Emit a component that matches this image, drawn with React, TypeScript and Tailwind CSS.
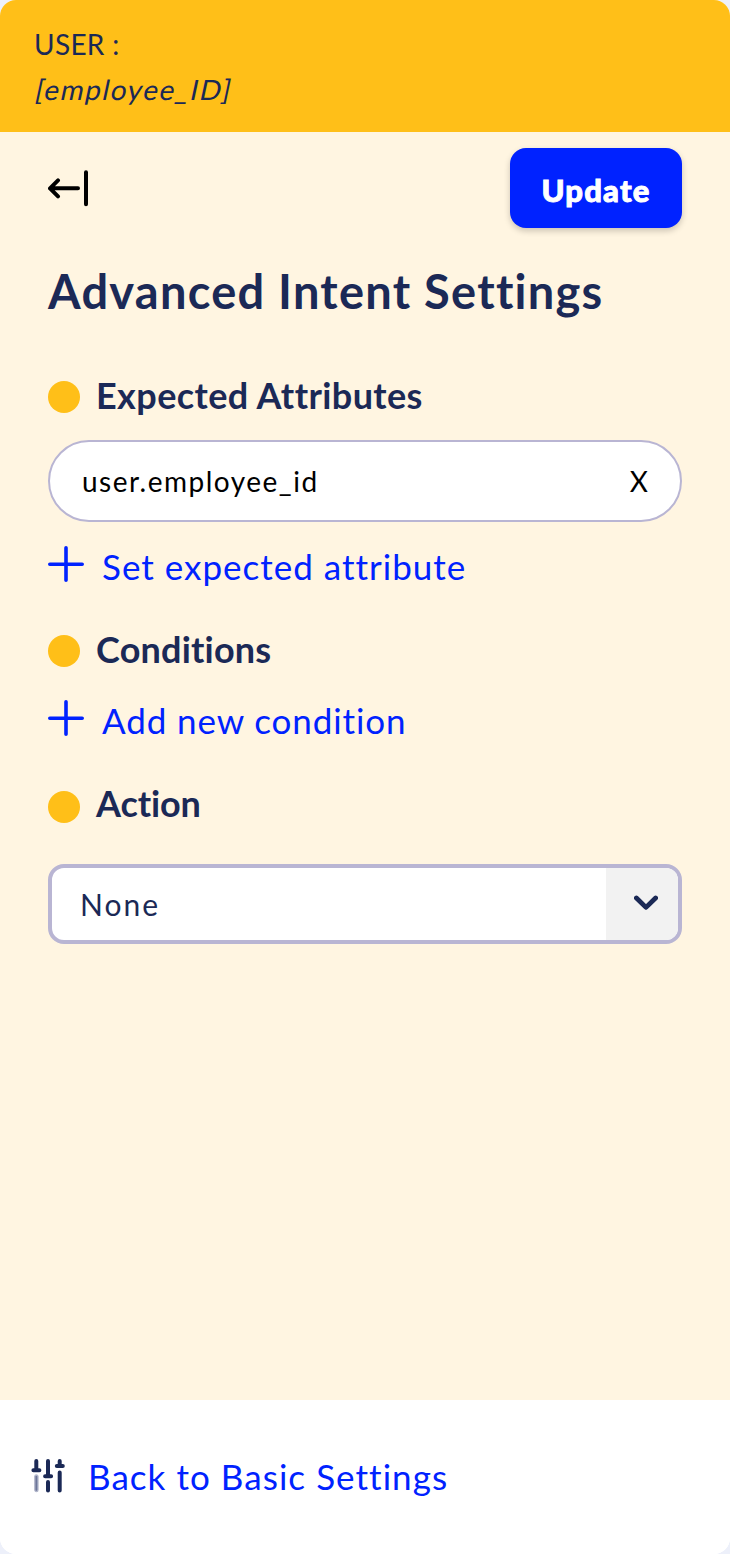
import type { ReactNode } from "react";

function SectionHeading({ children, className, dotClass, textClass }: { children: ReactNode; className: string; dotClass: string; textClass: string }) {
  return (
    <div className={`flex h-12 items-center ${className}`}>
      <span className={`size-8 shrink-0 rounded-full bg-[#ffbf18] ${dotClass}`} />
      <h2 className={`ml-4 whitespace-nowrap text-[36px] leading-[48px] font-bold ${textClass}`}>{children}</h2>
    </div>
  );
}

function AddLink({ children, className, textClass }: { children: ReactNode; className: string; textClass: string }) {
  return (
    <button className={`flex h-12 items-center text-[#0022ff] ${className}`}>
      <svg className="mb-1 size-9 shrink-0" viewBox="0 0 36 36" fill="none" stroke="currentColor" strokeWidth="3.6" strokeLinecap="round">
        <path d="M18 1.8v32.4M1.8 18.3h32.4" />
      </svg>
      <span className={`whitespace-nowrap text-[35px] leading-[48px] ${textClass}`}>{children}</span>
    </button>
  );
}

export default function App() {
  return (
    <div className="h-[1554px] w-[730px] bg-[#edf0fa] font-['Lato','Liberation_Sans',sans-serif] text-[#1b2956]">
      <div className="flex h-full flex-col overflow-hidden rounded-2xl bg-white">
        <header className="h-[132px] shrink-0 bg-[#ffbf18] pt-[21px] pl-8 text-[28px] leading-[46px]">
          <p className="pl-0.5 tracking-[0.3px]">USER :</p>
          <p className="-mt-px ml-1 w-fit -skew-x-12 tracking-[1.55px]">[employee_ID]</p>
        </header>

        <main className="flex flex-1 flex-col bg-[#fff5e1] px-12 pt-4">
          <div className="flex h-20 items-center justify-between">
            <button aria-label="Back" className="text-black">
              <svg className="h-10 w-11" viewBox="0 0 44 40" fill="none" stroke="currentColor" strokeWidth="4" strokeLinecap="round" strokeLinejoin="round">
                <path d="M30 20.3H2.5M10 12.3l-8 8 8 8M38 4.3v32" />
              </svg>
            </button>
            <button className="h-20 w-[172px] rounded-2xl bg-[#0022ff] pt-[5px] text-[31px] font-black tracking-[1.2px] text-white shadow-[0_3px_6px_rgba(0,0,0,0.2)] [-webkit-text-stroke:0.9px_white]">
              Update
            </button>
          </div>

          <h1 className="mt-[35px] h-14 text-[47px] leading-[56px] font-bold tracking-[1.25px] whitespace-nowrap">Advanced Intent Settings</h1>

          <SectionHeading className="mt-[52px]" dotClass="mt-1" textClass="tracking-[0.4px]">Expected Attributes</SectionHeading>
          <div className="mt-[21px] flex h-[82px] items-center justify-between rounded-full border-2 border-[#b9b5d3] bg-white pr-8 pl-8 text-[28px] text-black">
            <span className="tracking-[1.5px]">user.employee_id</span>
            <button aria-label="Remove attribute">X</button>
          </div>
          <AddLink className="mt-5" textClass="ml-[18px] tracking-[1px]">Set expected attribute</AddLink>

          <SectionHeading className="mt-[35px]" dotClass="mt-1" textClass="tracking-[0.2px]">Conditions</SectionHeading>
          <AddLink className="mt-[23px]" textClass="ml-[18px] tracking-[0.9px]">Add new condition</AddLink>

          <SectionHeading className="mt-[34px]" dotClass="mt-2.5" textClass="pt-px tracking-[-0.1px]">Action</SectionHeading>
          <div className="mt-[38px] flex h-20 overflow-hidden rounded-2xl border-4 border-[#b9b5d3] bg-white">
            <span className="flex-1 pl-7 text-[30px] leading-[72px] tracking-[2px]">None</span>
            <span className="flex w-[72px] items-center justify-center bg-[#f2f2f2] pb-[3px] pl-2">
              <svg className="h-4 w-6" viewBox="0 0 24 16" fill="none" stroke="currentColor" strokeWidth="4.8" strokeLinecap="round" strokeLinejoin="round">
                <path d="M2.4 3 12 12.4 21.6 3" />
              </svg>
            </span>
          </div>
        </main>

        <footer className="h-[154px] shrink-0 bg-white pt-[52px] pl-[31px]">
          <button className="flex h-12 items-center">
            <svg className="h-9 w-[34px]" viewBox="0 0 34 36" fill="none" stroke="currentColor" strokeWidth="4" strokeLinecap="round">
              <path d="M5.3 3v9M17 3v14M28.7 3v5M17 24v8.5M28.7 14.5v18" />
              <path d="M2.4 12.3h6M14.1 18.3h6M25.8 8h6" />
              <rect x="3.8" y="17" width="3.2" height="16.5" rx="1.6" fill="#6d769a" stroke="#b2b7cb" strokeWidth="1.3" />
            </svg>
            <span className="ml-[23px] whitespace-nowrap text-[35px] leading-[48px] tracking-[1.05px] text-[#0022ff]">Back to Basic Settings</span>
          </button>
        </footer>
      </div>
    </div>
  );
}
